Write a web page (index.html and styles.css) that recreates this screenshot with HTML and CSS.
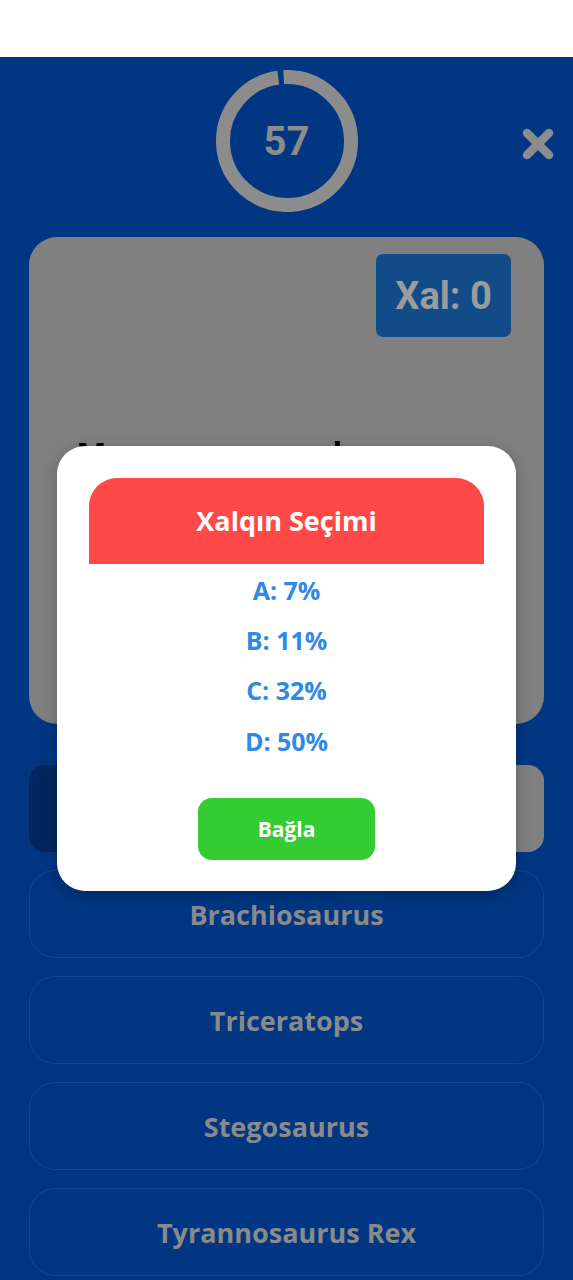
FILE: index.html
```html
<!DOCTYPE html>
<html lang="az">
<head>
<meta charset="utf-8">
<title>Quiz</title>
<link rel="stylesheet" href="styles.css">
</head>
<body>
<div class="statusbar"></div>
<main class="screen">
  <header class="top">
    <div></div>
    <div class="timer">
      <svg class="ring" width="142" height="142" viewBox="0 0 142 142">
        <circle cx="71" cy="71" r="64" fill="none" stroke="#8c8c8c" stroke-width="14" stroke-dasharray="396 406" transform="rotate(-93 71 71)"/>
      </svg>
      <span class="timer-num">57</span>
    </div>
    <div class="close-wrap">
      <svg class="close" width="34" height="34" viewBox="0 0 34 34">
        <line x1="6" y1="6" x2="28" y2="28" stroke="#8c8c8c" stroke-width="8.5" stroke-linecap="round"/>
        <line x1="28" y1="6" x2="6" y2="28" stroke="#8c8c8c" stroke-width="8.5" stroke-linecap="round"/>
      </svg>
    </div>
  </header>

  <section class="card">
    <div class="badge">Xal: 0</div>
    <p class="question">Mezozoy erasında ən uzun boyunlu dinozavr hansı idi?</p>
  </section>

  <div class="jokers">
    <div class="joker joker-dark"></div>
    <div class="joker joker-mid"></div>
    <div class="joker joker-gray">Dostuna<br>zəng et</div>
  </div>

  <div class="options">
    <button class="option">Brachiosaurus</button>
    <button class="option">Triceratops</button>
    <button class="option">Stegosaurus</button>
    <button class="option">Tyrannosaurus Rex</button>
  </div>
</main>

<div class="modal">
  <div class="modal-head">Xalqın Seçimi</div>
  <ul class="results">
    <li>A: 7%</li>
    <li>B: 11%</li>
    <li>C: 32%</li>
    <li>D: 50%</li>
  </ul>
  <button class="close-btn">Bağla</button>
</div>
</body>
</html>
```

FILE: styles.css
```css
* { box-sizing: border-box; }

html, body {
  margin: 0;
  padding: 0;
  background: #003682;
  font-family: "Open Sans", "Noto Sans", "DejaVu Sans", sans-serif;
}

body {
  width: 573px;
  min-height: 1280px;
  position: relative;
  overflow: hidden;
}

.statusbar {
  height: 57px;
  background: #ffffff;
}

.screen {
  padding: 13px 29px 0;
}

.top {
  display: grid;
  grid-template-columns: 1fr 142px 1fr;
  align-items: start;
}

.timer {
  position: relative;
  width: 142px;
  height: 142px;
  display: flex;
  align-items: center;
  justify-content: center;
}

.ring {
  position: absolute;
  left: 0;
  top: 0;
}

.timer-num {
  font-family: Roboto, sans-serif;
  font-size: 40px;
  font-weight: 700;
  color: #8c8c8c;
}

.close-wrap {
  display: flex;
  justify-content: flex-end;
  margin-top: 57px;
  margin-right: -11px;
}

.card {
  margin-top: 25px;
  height: 487px;
  background: #808080;
  border-radius: 28px;
  padding: 17px 33px 0 33px;
  display: flex;
  flex-direction: column;
  align-items: flex-end;
  overflow: hidden;
}

.badge {
  width: 135px;
  height: 83px;
  background: #114b88;
  border-radius: 7px;
  color: #9c9c9c;
  font-family: Roboto, sans-serif;
  font-size: 38px;
  font-weight: 700;
  display: flex;
  align-items: center;
  justify-content: center;
}

.question {
  align-self: stretch;
  margin: 96px 0 0;
  text-align: center;
  font-size: 32px;
  font-weight: 700;
  color: #000000;
  line-height: 42px;
}

.jokers {
  margin-top: 41px;
  display: flex;
  gap: 12px;
  height: 87px;
}

.joker {
  flex: 1;
  border-radius: 16px;
  display: flex;
  align-items: center;
  justify-content: center;
  text-align: center;
  font-size: 20px;
  font-weight: 700;
  color: #969696;
}

.joker-dark { background: #00265f; }
.joker-mid { background: #00265f; }
.joker-gray { background: #808080; }

.options {
  margin-top: 18px;
  display: flex;
  flex-direction: column;
  gap: 18px;
}

.option {
  height: 88px;
  width: 100%;
  background: transparent;
  border: 1px solid rgba(255, 255, 255, 0.09);
  border-radius: 26px;
  font-family: inherit;
  font-size: 27px;
  font-weight: 700;
  color: #8a8a8a;
}

.modal {
  position: absolute;
  left: 57px;
  top: 446px;
  width: 459px;
  height: 445px;
  background: #ffffff;
  border-radius: 28px;
  padding: 32px 32px 31px;
  display: flex;
  flex-direction: column;
  align-items: center;
  box-shadow: 0 4px 16px rgba(0, 0, 0, 0.25);
}

.modal-head {
  align-self: stretch;
  height: 86px;
  background: #ff4848;
  border-radius: 28px 28px 0 0;
  color: #ffffff;
  font-size: 27px;
  font-weight: 700;
  display: flex;
  align-items: center;
  justify-content: center;
}

.results {
  list-style: none;
  margin: 1px 0 0;
  padding: 0;
  text-align: center;
}

.results li {
  height: 50.3px;
  line-height: 50px;
  font-size: 25px;
  font-weight: 700;
  color: #2f8ae6;
}

.close-btn {
  margin-top: 32px;
  width: 177px;
  height: 62px;
  border: none;
  border-radius: 14px;
  background: #33cc33;
  color: #ffffff;
  font-family: inherit;
  font-size: 21px;
  font-weight: 700;
}
```
